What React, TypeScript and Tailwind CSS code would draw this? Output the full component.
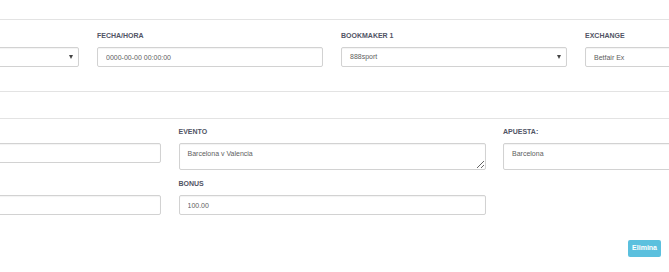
const font = "font-['Liberation_Sans',Arial,sans-serif]";

function Label({ children }: { children?: React.ReactNode }) {
  return (
    <div className="mb-[6px] h-[10px] text-[7px] font-bold uppercase leading-[10px] text-[#515465]">
      {children}
    </div>
  );
}

function SelectBox({ value }: { value: string }) {
  return (
    <div className="flex h-[20px] items-center justify-between rounded-[2px] border border-[#d2d2d2] bg-white pl-[8px] pr-[5px] text-[7px] text-[#606060] shadow-[inset_0_1px_1px_rgba(0,0,0,0.05)]">
      <span>{value}</span>
      <span className="h-0 w-0 border-x-[2.5px] border-t-[4px] border-x-transparent border-t-[#444]" />
    </div>
  );
}

function TextInput({ value }: { value: string }) {
  return (
    <input
      readOnly
      value={value}
      className="block h-[20px] w-full rounded-[2px] border border-[#d2d2d2] bg-white px-[8px] text-[7px] text-[#606060] shadow-[inset_0_1px_1px_rgba(0,0,0,0.05)] outline-none"
    />
  );
}

function TextArea({ value }: { value: string }) {
  return (
    <textarea
      readOnly
      value={value}
      className="block h-[27px] w-full resize-y rounded-[2px] border border-[#d2d2d2] bg-white px-[8px] pt-[5px] text-[7px] leading-[10px] text-[#606060] shadow-[inset_0_1px_1px_rgba(0,0,0,0.05)] outline-none"
    />
  );
}

export default function App() {
  return (
    <div className={`h-[272px] w-[669px] overflow-hidden bg-white ${font}`}>
      <div className="h-[20px] border-b border-[#e3e3e3]" />

      {/* Datos de la apuesta */}
      <div className="border-b border-[#e3e3e3] pb-[24px] pt-[11px]">
        <div className="ml-[-147px] grid w-[958px] grid-cols-4 gap-x-[18px]">
          <div>
            <Label />
            <SelectBox value="" />
          </div>
          <div>
            <Label>Fecha/Hora</Label>
            <TextInput value="0000-00-00 00:00:00" />
          </div>
          <div>
            <Label>Bookmaker 1</Label>
            <SelectBox value="888sport" />
          </div>
          <div>
            <Label>Exchange</Label>
            <TextInput value="Betfair Ex" />
          </div>
        </div>
      </div>

      <div className="h-[27px] border-b border-[#e3e3e3]" />

      {/* Evento */}
      <div className="pt-[8px]">
        <div className="ml-[-146px] grid w-[956px] grid-cols-3 items-start gap-x-[17.5px] gap-y-[9px]">
          <div>
            <Label />
            <TextInput value="" />
          </div>
          <div>
            <Label>Evento</Label>
            <TextArea value="Barcelona v Valencia" />
          </div>
          <div>
            <Label>Apuesta:</Label>
            <TextArea value="Barcelona" />
          </div>
          <div>
            <Label />
            <TextInput value="" />
          </div>
          <div>
            <Label>Bonus</Label>
            <TextInput value="100.00" />
          </div>
        </div>
      </div>

      <div className="flex justify-end pr-[8px] pt-[25px]">
        <button
          type="button"
          className="h-[17px] rounded-[2px] bg-[#5bc0de] px-[4px] text-[7px] font-bold text-white"
        >
          Elimina
        </button>
      </div>
    </div>
  );
}
